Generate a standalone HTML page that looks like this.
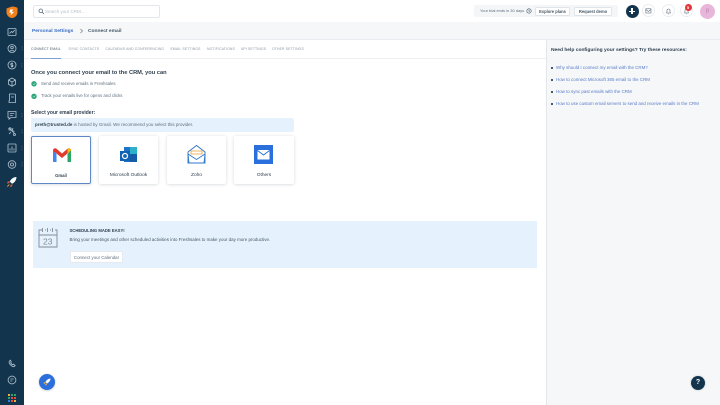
<!DOCTYPE html>
<html><head><meta charset="utf-8">
<style>
html,body{margin:0;padding:0;width:720px;height:405px;overflow:hidden;background:#fff;font-family:"Liberation Sans",sans-serif;color:#2f3f4f}
.a{position:absolute;white-space:nowrap}
.t{position:absolute;white-space:nowrap;line-height:8px;height:8px}
.tab{font-size:3.4px;color:#8a97a3;letter-spacing:.15px;top:45px}
.card{position:absolute;top:136px;width:59px;height:48px;background:#fff;border-radius:2px;box-shadow:0 .5px 3px rgba(24,50,71,.2)}
.lab{position:absolute;left:0;right:0;top:36px;text-align:center;font-size:4.8px;line-height:8px;color:#2f3f4f}
.link{font-size:4.45px;color:#5b7cc8;left:556px}
.dot{position:absolute;left:551px;width:2px;height:2px;background:#475867}
.ci{position:absolute;top:4px;width:13px;height:13px;border-radius:50%;border:.5px solid #e9edf1;box-sizing:border-box;background:#fff}
.btn{position:absolute;background:#fff;border:.5px solid #e0e5ea;border-radius:1.5px;box-sizing:border-box;font-size:4.1px;font-weight:bold;color:#475867;text-align:center;top:6.5px;height:9px;line-height:8.5px}
</style></head><body>

<div class="a" style="left:0;top:0;width:24px;height:405px;background:#12344d"></div>
<svg class="a" style="left:0;top:0" width="24" height="405" viewBox="0 0 24 405" fill="none" stroke="#aebfcb" stroke-width=".85">
<path d="M12 6.500c3.500 0 5.500 1.500 5.500 1.500v4.500c0 3-3 5.500-5.500 5.500s-5.500-2.500-5.500-5.500V8.500z" fill="#f2811d" stroke="none"/>
<path d="M10 9.500h3l-1 2.500h2l-3.500 3.500.7-2.800H9.500z" fill="#fff" stroke="none"/>
<rect x="8" y="28.500" width="8" height="7" rx=".7"/><path d="M9.500 33.500l2-2 1.200 1 2-2.500"/>
<circle cx="12" cy="48.500" r="4"/><circle cx="12" cy="47.500" r="1.300"/><path d="M9.500 51.500c1-1.500 4-1.500 5 0"/>
<circle cx="12" cy="65" r="4"/><path d="M12 62.500v5M13 63.500h-1.500a.8.800 0 000 1.600h1a.8.800 0 010 1.500H10.800"/>
<path d="M8.500 80l3.500-2 3.500 2v4.200l-3.500 2-3.500-2zM8.500 80l3.500 2 3.500-2M12 82v4"/>
<path d="M9 94h5.500a1 1 0 011 1v7.500H9.500M9 100.500v2h1M11 97h3"/><path d="M9.500 94v7"/>
<path d="M8 111.500h8v6h-5l-2 1.700v-1.700H8zM9.800 113.500h4.400M9.800 115.500h3"/>
<path d="M9 128l6 6M13 128l-1 2.500 2.500 1M9 134l2-2"/><circle cx="10" cy="129" r="1.200"/><circle cx="14.500" cy="134.500" r="1"/>
<rect x="8" y="144" width="8" height="8" rx=".7"/><path d="M10 150.500v-2M12 150.500v-4M14 150.500v-2"/>
<circle cx="12" cy="164.500" r="3.800"/><circle cx="12" cy="164.500" r="1.500"/>
<path d="M16.500 177c-3.200.2-5.500 1.800-6.700 4.600l2.200 2.200c2.800-1.200 4.300-3.600 4.500-6.800z" fill="#f6f8fa" stroke="none"/>
<path d="M9.800 181.200l-2 .4-.9 1.900 2.500-.4zM12.500 184.300l-.4 2-1.900.9.400-2.500z" fill="#e4583a" stroke="none"/>
<path d="M9.300 184.600l-2 2" stroke="#f2b33d"/>
<path d="M9.500 361c-.8.800-.5 2 1 3.800 1.500 1.600 2.800 2.300 3.800 1.700l.8-1-1.700-1.300-.9.600c-.8-.4-1.400-1.200-1.800-2l.6-.9-1-1.700z"/>
<circle cx="12" cy="380" r="3.900"/><path d="M10.300 379h3.400M10.300 381h2"/>
<path d="M22 46v5M22 63v5M22 113v5M22 129v5M22 146v5M22 162v5" stroke="#5a7488" stroke-width=".7" stroke-dasharray=".8 .8"/>
</svg>
<svg class="a" style="left:8px;top:394px" width="10" height="9">
<g><rect x="0" y="0" width="2" height="2" fill="#e8b23a"/><rect x="3" y="0" width="2" height="2" fill="#2fa36b"/><rect x="6" y="0" width="2" height="2" fill="#2fa36b"/>
<rect x="0" y="3" width="2" height="2" fill="#2fa36b"/><rect x="3" y="3" width="2" height="2" fill="#e0503c"/><rect x="6" y="3" width="2" height="2" fill="#e0503c"/>
<rect x="0" y="6" width="2" height="2" fill="#2c7be5"/><rect x="3" y="6" width="2" height="2" fill="#e0503c"/><rect x="6" y="6" width="2" height="2" fill="#e8b23a"/></g>
</svg>

<!-- top bar -->
<div class="a" style="left:33px;top:5px;width:127px;height:13px;border:.5px solid #e3e7eb;border-radius:2px;box-sizing:border-box;background:#fff"></div>
<svg class="a" style="left:38px;top:8px" width="7" height="7" fill="none" stroke="#5f6f7e" stroke-width=".8"><circle cx="2.800" cy="2.800" r="1.800"/><path d="M4.200 4.200l1.600 1.600"/></svg>
<div class="t" style="left:45px;top:7.500px;font-size:4.500px;color:#b4bdc6">Search your CRM...</div>

<div class="a" style="left:474px;top:5px;width:144px;height:12px;background:#f4f6f8;border-radius:2px"></div>
<div class="t" style="left:480px;top:7px;font-size:3.950px;color:#5f6f7e">Your trial ends in 30 days</div>
<svg class="a" style="left:526px;top:8px" width="6" height="6" fill="none" stroke="#475867" stroke-width=".6"><circle cx="3" cy="3" r="2.200"/><path d="M3 1.800v1.400h1"/></svg>
<div class="btn" style="left:535px;width:35px">Explore plans</div>
<div class="btn" style="left:574px;width:38px">Request demo</div>

<div class="a" style="left:625.500px;top:4.500px;width:13px;height:13px;border-radius:50%;background:#12344d"></div>
<div class="a" style="left:629px;top:10.500px;width:6px;height:1.200px;background:#fff"></div>
<div class="a" style="left:631.400px;top:8px;width:1.200px;height:6px;background:#fff"></div>
<div class="ci" style="left:642px"></div>
<svg class="a" style="left:645px;top:8px" width="7" height="6" fill="none" stroke="#5f6f7e" stroke-width=".6"><rect x=".8" y=".8" width="5.200" height="4.200"/><path d="M.8 1.500l2.600 2 2.600-2"/></svg>
<div class="ci" style="left:662px"></div>
<svg class="a" style="left:665px;top:7.500px" width="7" height="7" fill="none" stroke="#5f6f7e" stroke-width=".6"><path d="M1.500 5h4L5 4V2.500C5 1.500 4.300 1 3.500 1S2 1.500 2 2.500V4zM3 6h1"/></svg>
<div class="ci" style="left:680px"></div>
<svg class="a" style="left:683px;top:8px" width="7" height="7" fill="none" stroke="#5f6f7e" stroke-width=".6"><path d="M1.500 5h4L5 4V2.500C5 1.500 4.300 1 3.500 1S2 1.500 2 2.500V4zM3 6h1"/></svg>
<div class="a" style="left:684.500px;top:3.500px;width:7px;height:7px;border-radius:50%;background:#e43538;color:#fff;font-size:4px;font-weight:bold;text-align:center;line-height:7px">5</div>
<div class="a" style="left:700px;top:4px;width:15px;height:15px;border-radius:50%;background:#e7b6da;color:#b582a6;font-size:6px;text-align:center;line-height:15px">p</div>

<!-- breadcrumb -->
<div class="a" style="left:24px;top:22px;width:696px;height:18px;background:#f5f7f9;border-bottom:.5px solid #e9edf1;box-sizing:border-box"></div>
<div class="t" style="left:32px;top:27px;font-size:4.900px;font-weight:bold;color:#3c6fc4;transform:translateY(0)"><span style="position:relative;top:.6px">Personal Settings</span></div>
<svg class="a" style="left:79px;top:28px" width="5" height="6" fill="none" stroke="#5f6f7e" stroke-width=".6"><path d="M1.500 1l2 2-2 2"/></svg>
<div class="t" style="left:88px;top:27px;font-size:4.900px;font-weight:bold;color:#475867"><span style="position:relative;top:.6px">Connect email</span></div>

<!-- tabs -->
<div class="t tab" style="left:31px;color:#475867">CONNECT EMAIL</div>
<div class="t tab" style="left:68.500px">SYNC CONTACTS</div>
<div class="t tab" style="left:105.500px">CALENDAR AND CONFERENCING</div>
<div class="t tab" style="left:170.500px">EMAIL SETTINGS</div>
<div class="t tab" style="left:207px">NOTIFICATIONS</div>
<div class="t tab" style="left:241px">API SETTINGS</div>
<div class="t tab" style="left:272px">OTHER SETTINGS</div>
<div class="a" style="left:24px;top:58px;width:522px;height:.5px;background:#edf0f3"></div>
<div class="a" style="left:31px;top:57.500px;width:30px;height:1px;background:#7f9fd8"></div>

<!-- content -->
<div class="t" style="left:31px;top:68.600px;font-size:5.700px;font-weight:bold;color:#2f3f4f">Once you connect your email to the CRM, you can</div>
<svg class="a" style="left:31px;top:81px" width="6" height="20"><circle cx="3" cy="2.800" r="2.700" fill="#2aa77b"/><path d="M1.800 2.800l1 1 1.500-1.800" stroke="#fff" stroke-width=".5" fill="none"/><circle cx="3" cy="15.300" r="2.700" fill="#2aa77b"/><path d="M1.800 15.300l1 1 1.500-1.800" stroke="#fff" stroke-width=".5" fill="none"/></svg>
<div class="t" style="left:41px;top:79.500px;font-size:4.350px;color:#5f6f7e">Send and receive emails in Freshsales</div>
<div class="t" style="left:41px;top:92px;font-size:4.350px;color:#5f6f7e">Track your emails live for opens and clicks</div>
<div class="t" style="left:31px;top:108.600px;font-size:5px;font-weight:bold;color:#2f3f4f">Select your email provider:</div>

<div class="a" style="left:31px;top:118px;width:263px;height:14px;background:#e5f2fd;border-radius:2px"></div>
<div class="t" style="left:35px;top:121px;font-size:4.500px;color:#5f6f7e"><b style="color:#2f3f4f">preth@trusted.de</b> is hosted by Gmail. We recommend you select this provider.</div>

<div class="card" style="left:31px;width:60px;border:.8px solid #5f86c6;box-sizing:border-box;height:48px"><div class="lab" style="top:34.500px;font-weight:bold;font-size:4.200px">Gmail</div></div>
<svg class="a" style="left:52px;top:147px" width="20" height="16"><path d="M1 3v12h3.500V7z" fill="#4285f4"/><path d="M15.500 7v8H19V3z" fill="#2ba667"/><path d="M1 3.500C1 1.500 3 .5 4.500 1.800L10 6.500l5.500-4.700C17 .5 19 1.500 19 3.500L16 6l-6 5-5.500-4.500L1 4z" fill="#e0392d"/><path d="M15.500 1.800C17 .5 19 1.500 19 3.500L15.500 6.500z" fill="#f6b70e"/></svg>
<div class="card" style="left:99px"><div class="lab">Microsoft Outlook</div></div>
<svg class="a" style="left:119px;top:146px" width="20" height="17"><rect x="5" y="1" width="13" height="15" fill="#1f73c9"/><rect x="11" y="1" width="7" height="7" fill="#2fb0c9"/><rect x="11" y="8" width="7" height="8" fill="#155ba5"/><rect x="1" y="5" width="10" height="10" fill="#0f62b5"/><circle cx="6" cy="10" r="2.500" fill="none" stroke="#fff" stroke-width="1.200"/></svg>
<div class="card" style="left:167px"><div class="lab">Zoho</div></div>
<svg class="a" style="left:186px;top:144px" width="21" height="21" fill="none"><path d="M2 8l8.500-6.500L19 8v11H2z" stroke="#2d77c9" stroke-width=".9" fill="#fff"/><path d="M5 7h11v3H5z" stroke="#ef9a2d" stroke-width=".8"/><path d="M2 10l8.500 5.500L19 10l-1 9H3z" stroke="#2d77c9" stroke-width=".9" fill="#fff"/></svg>
<div class="card" style="left:234px;width:60px"><div class="lab">Others</div></div>
<svg class="a" style="left:254px;top:145px" width="20" height="19"><rect width="19" height="19" fill="#2a6fdb"/><rect x="3.500" y="5" width="12" height="9.500" fill="#fff"/><path d="M3.500 5.500l6 4.500 6-4.500" fill="none" stroke="#2a6fdb" stroke-width=".9"/></svg>

<!-- banner -->
<div class="a" style="left:33px;top:221px;width:504px;height:47px;background:#e5f2fd"></div>
<svg class="a" style="left:37px;top:227px" width="22" height="22" fill="none" stroke="#7f8c98" stroke-width=".9"><path d="M5 3H2v17h18V3h-2M1.500 8h19M8 3h1M13 3h1"/><path d="M5.500 1v4M10.500 1v4M15.500 1v4"/><text x="6" y="17.500" font-size="8.500" fill="#7f8c98" stroke="none" font-family="Liberation Sans">23</text></svg>
<div class="t" style="left:69.500px;top:227px;font-size:4.200px;font-weight:bold;color:#2f3f4f">SCHEDULING MADE EASY!</div>
<div class="t" style="left:69.500px;top:236.300px;font-size:4.470px;color:#475867">Bring your meetings and other scheduled activities into Freshsales to make your day more productive.</div>
<div class="a" style="left:70px;top:251px;width:53px;height:12px;background:#fff;border:.5px solid #e6eaee;border-radius:1.500px;box-sizing:border-box;font-size:4.400px;color:#5f6f7e;text-align:center;line-height:11px">Connect your Calendar</div>

<!-- right panel -->
<div class="a" style="left:545.500px;top:40px;width:174.500px;height:365px;background:#f5f7f9;border-left:.5px solid #e3e7eb;box-sizing:border-box"></div>
<div class="t" style="left:551px;top:46px;font-size:4.900px;font-weight:bold;color:#2f3f4f"><span style="position:relative;top:.6px">Need help configuring your settings? Try these resources:</span></div>
<div class="dot" style="top:67px"></div><div class="t link" style="top:64px">Why should I connect my email with the CRM?</div>
<div class="dot" style="top:79px"></div><div class="t link" style="top:76px">How to connect Microsoft 365 email to the CRM</div>
<div class="dot" style="top:91px"></div><div class="t link" style="top:88px">How to sync past emails with the CRM</div>
<div class="dot" style="top:103px"></div><div class="t link" style="top:100px">How to use custom email servers to send and receive emails in the CRM</div>

<!-- floating -->
<div class="a" style="left:39px;top:374px;width:16px;height:16px;border-radius:50%;background:#2a6fdb;box-shadow:0 .5px 2px rgba(0,0,0,.25)"></div>
<svg class="a" style="left:39px;top:374px" width="16" height="16"><path d="M11.500 4.500c-2.500.2-4 1.500-5 3.500l1.500 1.500c2-1 3.300-2.500 3.500-5z" fill="#fff"/><path d="M6.500 8l-1.500.3-.5 1.500 1.800-.3zM8 9.500l-.3 1.500-1.500.5.300-1.800z" fill="#f2b33d"/></svg>
<div class="a" style="left:691px;top:376px;width:14px;height:14px;border-radius:50%;background:#12344d;color:#fff;font-size:7px;font-weight:bold;text-align:center;line-height:14px;box-shadow:0 0 2px rgba(0,0,0,.2)">?</div>

</body></html>
